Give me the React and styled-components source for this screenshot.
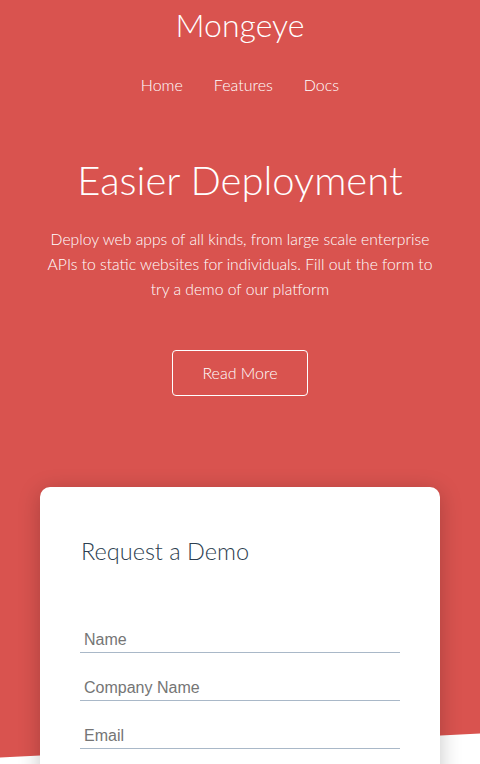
import React from 'react';
import styled, { createGlobalStyle } from 'styled-components';

const GlobalStyle = createGlobalStyle`
  body {
    margin: 0;
    font-family: Lato, "Open Sans", sans-serif;
    background: #fff;
  }
  * {
    box-sizing: border-box;
  }
`;

const Page = styled.div`
  width: 100%;
  min-height: 764px;
  overflow: hidden;
`;

const Hero = styled.section`
  background: #d9534f;
  color: #fff;
  text-align: center;
  padding: 6px 0 362px;
  clip-path: polygon(0 0, 100% 0, 100% calc(100% - 24px), 0 100%);
`;

const Logo = styled.h1`
  margin: 0;
  font-size: 32px;
  font-weight: 300;
  line-height: 1.2;
`;

const Nav = styled.nav`
  display: flex;
  justify-content: center;
  gap: 31px;
  margin-top: 31px;
`;

const NavLink = styled.a`
  color: #fff;
  text-decoration: none;
  font-size: 16px;
  font-weight: 300;
  line-height: 1.2;
`;

const Title = styled.h2`
  margin: 61px 0 0;
  font-size: 40px;
  font-weight: 300;
  line-height: 1.2;
`;

const Lead = styled.p`
  max-width: 396px;
  margin: 23px auto 0;
  font-size: 15.7px;
  font-weight: 300;
  line-height: 25px;
  color: #fff;
`;

const Button = styled.a`
  display: inline-block;
  margin-top: 48px;
  padding: 12px 29px;
  border: 1px solid #fff;
  border-radius: 4px;
  color: #fff;
  font-size: 16px;
  font-weight: 300;
  line-height: 20px;
  text-decoration: none;
`;

const FormSection = styled.section`
  position: relative;
  margin-top: -271px;
  padding: 0 40px;
`;

const Card = styled.div`
  background: #fff;
  border-radius: 10px;
  box-shadow: 0 4px 22px rgba(0, 0, 0, 0.22);
  padding: 50px 40px 40px;
`;

const CardTitle = styled.h3`
  margin: 0 0 63px 1px;
  font-size: 23.5px;
  font-weight: 300;
  line-height: 1.2;
  color: #2c3e50;
`;

const Field = styled.input`
  display: block;
  width: 100%;
  margin-bottom: 23px;
  padding: 3px 4px;
  border: none;
  border-bottom: 1px solid #a9b8c8;
  font-family: "Liberation Sans", Arial, sans-serif;
  font-size: 16px;
  line-height: 18px;
  color: #333;
  outline: none;
  background: transparent;

  &::placeholder {
    color: #757575;
  }
`;

export default function App() {
  return (
    <Page>
      <GlobalStyle />
      <Hero>
        <Logo>Mongeye</Logo>
        <Nav>
          <NavLink href="#">Home</NavLink>
          <NavLink href="#">Features</NavLink>
          <NavLink href="#">Docs</NavLink>
        </Nav>
        <Title>Easier Deployment</Title>
        <Lead>
          Deploy web apps of all kinds, from large scale enterprise APIs to static
          websites for individuals. Fill out the form to try a demo of our platform
        </Lead>
        <Button href="#">Read More</Button>
      </Hero>
      <FormSection>
        <Card>
          <CardTitle>Request a Demo</CardTitle>
          <Field placeholder="Name" />
          <Field placeholder="Company Name" />
          <Field placeholder="Email" />
        </Card>
      </FormSection>
    </Page>
  );
}
